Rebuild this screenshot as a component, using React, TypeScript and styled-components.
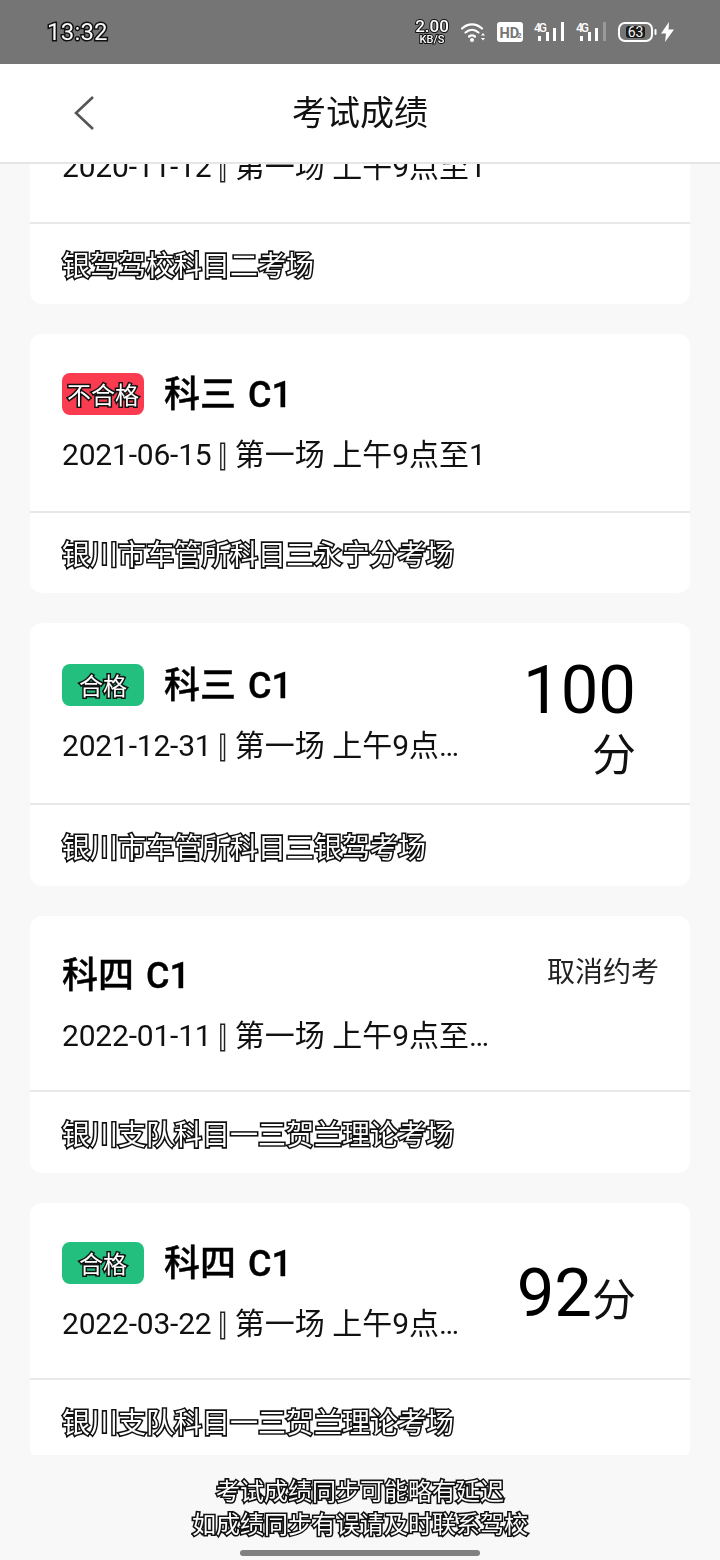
import React from "react";
import styled, { createGlobalStyle, css } from "styled-components";

const Global = createGlobalStyle`
  html, body { margin: 0; padding: 0; background: #f8f8f8; }
  * { box-sizing: border-box; }
`;

const gray = css`
  filter: grayscale(1);
`;

const outline = (c: string, w = 3.2) => css`
  -webkit-text-stroke: ${w}px ${c};
  paint-order: stroke fill;
  ${gray}
`;

const FONT = `Roboto, "Noto Sans CJK SC", sans-serif`;

const Page = styled.div`
  width: 720px;
  height: 1560px;
  display: flex;
  flex-direction: column;
  overflow: hidden;
  background: #f8f8f8;
  font-family: ${FONT};
  color: #000;
`;

const StatusBar = styled.div`
  height: 64px;
  flex: none;
  background: #757575;
  display: flex;
  align-items: center;
  padding: 0 46px 0 47px;
  justify-content: space-between;
`;
const Time = styled.span`
  font-size: 24px;
  color: #f8f8f8;
  letter-spacing: 0.2px;
  ${outline("#111", 3)}
`;
const StatusIcons = styled.div`
  display: flex;
  align-items: center;
`;
const Speed = styled.div`
  width: 36px;
  margin-right: 11px;
  display: flex;
  flex-direction: column;
  align-items: center;
  color: #fff;
  font-weight: 500;
  ${outline("#111", 2)}
`;
const SpeedValue = styled.span`
  font-size: 17px;
  line-height: 15px;
`;
const SpeedUnit = styled.span`
  font-size: 11px;
  line-height: 11px;
`;
const StatusIcon = styled.svg<{ $gap: number }>`
  display: block;
  flex: none;
  margin-right: ${(p) => p.$gap}px;
`;

const Header = styled.header`
  height: 100px;
  flex: none;
  background: #fff;
  border-bottom: 2px solid #e6e6e6;
  display: flex;
  align-items: center;
  justify-content: center;
  position: relative;
`;
const Back = styled.svg`
  position: absolute;
  left: 72px;
  top: 31px;
`;
const Title = styled.h1`
  margin: 0;
  font-size: 34px;
  font-weight: 400;
  color: #111;
  line-height: 48px;
  ${gray}
`;

const Scroller = styled.main`
  height: 1291px;
  flex: none;
  overflow: hidden;
  padding: 0 30px;
`;
const List = styled.div`
  display: flex;
  flex-direction: column;
  gap: 30px;
  margin-top: -18px;
`;
const Card = styled.section`
  background: #fff;
  border-radius: 12px;
  overflow: hidden;
`;
const Main = styled.div<{ $height: number; $top: number }>`
  height: ${(p) => p.$height}px;
  padding: ${(p) => p.$top}px 32px 0;
  display: flex;
  border-bottom: 2px solid #e8e8e8;
`;
const Left = styled.div`
  flex: 1;
  min-width: 0;
`;
const TitleRow = styled.div`
  display: flex;
  align-items: center;
  gap: 20px;
  height: 48px;
  margin-bottom: 16px;
`;
const Chip = styled.span<{ $tone: "pass" | "fail" }>`
  width: 82px;
  height: 42px;
  margin-top: -1px;
  border-radius: 8px;
  flex: none;
  display: flex;
  align-items: center;
  justify-content: center;
  background: ${(p) => (p.$tone === "pass" ? "#23bf7f" : "#fb3c50")};
`;
const ChipText = styled.span`
  font-size: 24px;
  color: #fff;
  ${outline("#111", 3)}
`;
const Subject = styled.span`
  font-size: 36px;
  font-weight: 500;
  line-height: 40px;
  margin-top: 2px;
  color: #000;
  white-space: pre;
  word-spacing: 3px;
  -webkit-text-stroke: 0.4px #000;
  ${gray}
`;
const Schedule = styled.div`
  font-size: 30px;
  line-height: 42px;
  color: #111;
  white-space: nowrap;
  overflow: hidden;
  text-overflow: ellipsis;
  ${gray}
`;
const DateText = styled.span`
  letter-spacing: -0.2px;
`;
const Sep = styled.span`
  color: #fff;
  margin-right: 1px;
  ${outline("#222", 3)}
`;
const Aside = styled.div<{ $width: number }>`
  flex: none;
  width: ${(p) => p.$width}px;
  text-align: right;
`;
const Score = styled.div<{ $offset: number }>`
  margin: ${(p) => p.$offset}px 22px 0 16px;
  font-size: 67px;
  line-height: 58px;
  color: #000;
  ${gray}
`;
const Unit = styled.span`
  font-size: 44px;
  color: #111;
`;
const Cancel = styled.div`
  font-size: 28px;
  line-height: 40px;
  color: #222;
  margin-right: -1px;
  margin-top: 2px;
  ${gray}
`;
const Venue = styled.div<{ $height: number }>`
  height: ${(p) => p.$height}px;
  padding: 0 32px;
  display: flex;
  align-items: center;
  font-size: 28px;
  color: #fff;
  ${outline("#111")}
`;

const Footer = styled.footer`
  flex: 1;
  padding-top: 21px;
  display: flex;
  flex-direction: column;
  align-items: center;
`;
const Note = styled.div`
  font-size: 24px;
  line-height: 33px;
  text-align: center;
  color: #fff;
  ${outline("#111")}
`;
const HomeBar = styled.div`
  width: 240px;
  height: 6px;
  border-radius: 3px;
  background: #808080;
  margin-top: 8px;
`;

function Signal({ gap, dim }: { gap: number; dim?: boolean }) {
  return (
    <StatusIcon $gap={gap} width="31" height="20" viewBox="0 0 31 20">
      <text x="0" y="10" fontFamily="Roboto" fontSize="12" fontWeight="500" fill="#fff" textLength="13">4G</text>
      <rect x="4" y="14" width="3" height="5" fill="#fff" />
      <rect x="12" y="10" width="3" height="9" fill="#fff" />
      <rect x="19" y="6" width="3" height="13" fill="#fff" />
      <rect x="27" y="0" width="3" height="19" fill={dim ? "#9a9a9a" : "#fff"} />
    </StatusIcon>
  );
}

function Slot({ date, slot }: { date: string; slot: string }) {
  return (
    <Schedule>
      <DateText>{date}</DateText> <Sep>|</Sep> {slot}
    </Schedule>
  );
}

export default function App() {
  return (
    <Page>
      <Global />
      <StatusBar>
        <Time>13:32</Time>
        <StatusIcons>
          <Speed>
            <SpeedValue>2.00</SpeedValue>
            <SpeedUnit>KB/S</SpeedUnit>
          </Speed>
          <StatusIcon $gap={10} width="26" height="20" viewBox="0 0 26 20">
            <g fill="none" stroke="#fff" strokeWidth="2.2" strokeLinecap="round">
              <path d="M1 6.5C7 1 15 1 21 6.5" />
              <path d="M4.5 10.5C8.5 7 13.5 7 17.5 10.5" />
              <path d="M8 14.5C10 13 12 13 14 14.5" />
            </g>
            <circle cx="11" cy="18" r="2" fill="#fff" />
            <path d="M20 13.5l2-2.5 2 2.5zM20 16l2 2.5 2-2.5z" fill="#fff" />
          </StatusIcon>
          <StatusIcon $gap={11} width="26" height="20" viewBox="0 0 26 20">
            <rect width="26" height="20" rx="3" fill="#fff" />
            <text x="2.5" y="15.5" fontFamily="Roboto" fontSize="14.5" fontWeight="700" fill="#757575">HD</text>
            <text x="20" y="15.5" fontFamily="Roboto" fontSize="8" fontWeight="700" fill="#757575">2</text>
          </StatusIcon>
          <Signal gap={11} />
          <Signal gap={11} dim />
          <StatusIcon $gap={3} width="40" height="20" viewBox="0 0 40 20">
            <rect x="1" y="1" width="33" height="18" rx="6" fill="none" stroke="#fff" strokeWidth="2" />
            <rect x="36.5" y="7" width="2" height="6" rx="1" fill="#fff" />
            <rect x="8" y="4" width="19" height="12" rx="3" fill="#1a1a1a" />
            <text x="17.5" y="15" textAnchor="middle" fontFamily="Roboto" fontSize="14" fill="#f4f4f4">63</text>
          </StatusIcon>
          <StatusIcon $gap={0} width="13" height="20" viewBox="0 0 13 20">
            <path d="M8 0L0 11.5h5L4 20l9-12.5H7.5z" fill="#fff" />
          </StatusIcon>
        </StatusIcons>
      </StatusBar>

      <Header>
        <Back width="26" height="36" viewBox="0 0 26 36">
          <path d="M21 2L4 18l17 16" fill="none" stroke="#555" strokeWidth="2.6" />
        </Back>
        <Title>考试成绩</Title>
      </Header>

      <Scroller>
        <List>
          <Card>
            <Main $height={78} $top={0}>
              <Left>
                <Slot date="2020-11-12" slot="第一场 上午9点至1" />
              </Left>
            </Main>
            <Venue $height={80}>银驾驾校科目二考场</Venue>
          </Card>

          <Card>
            <Main $height={179} $top={36}>
              <Left>
                <TitleRow>
                  <Chip $tone="fail"><ChipText>不合格</ChipText></Chip>
                  <Subject>科三 C1</Subject>
                </TitleRow>
                <Slot date="2021-06-15" slot="第一场 上午9点至1" />
              </Left>
            </Main>
            <Venue $height={80}>银川市车管所科目三永宁分考场</Venue>
          </Card>

          <Card>
            <Main $height={182} $top={38}>
              <Left>
                <TitleRow>
                  <Chip $tone="pass"><ChipText>合格</ChipText></Chip>
                  <Subject>科三 C1</Subject>
                </TitleRow>
                <Slot date="2021-12-31" slot="第一场 上午9点至11点" />
              </Left>
              <Aside $width={170}>
                <Score $offset={0}>
                  100<Unit>分</Unit>
                </Score>
              </Aside>
            </Main>
            <Venue $height={81}>银川市车管所科目三银驾考场</Venue>
          </Card>

          <Card>
            <Main $height={176} $top={35}>
              <Left>
                <TitleRow>
                  <Subject>科四 C1</Subject>
                </TitleRow>
                <Slot date="2022-01-11" slot="第一场 上午9点至11点" />
              </Left>
              <Aside $width={160}>
                <Cancel>取消约考</Cancel>
              </Aside>
            </Main>
            <Venue $height={81}>银川支队科目一三贺兰理论考场</Venue>
          </Card>

          <Card>
            <Main $height={177} $top={36}>
              <Left>
                <TitleRow>
                  <Chip $tone="pass"><ChipText>合格</ChipText></Chip>
                  <Subject>科四 C1</Subject>
                </TitleRow>
                <Slot date="2022-03-22" slot="第一场 上午9点至11点" />
              </Left>
              <Aside $width={170}>
                <Score $offset={25}>
                  92<Unit>分</Unit>
                </Score>
              </Aside>
            </Main>
            <Venue $height={81}>银川支队科目一三贺兰理论考场</Venue>
          </Card>
        </List>
      </Scroller>

      <Footer>
        <Note>
          考试成绩同步可能略有延迟
          <br />
          如成绩同步有误请及时联系驾校
        </Note>
        <HomeBar />
      </Footer>
    </Page>
  );
}
